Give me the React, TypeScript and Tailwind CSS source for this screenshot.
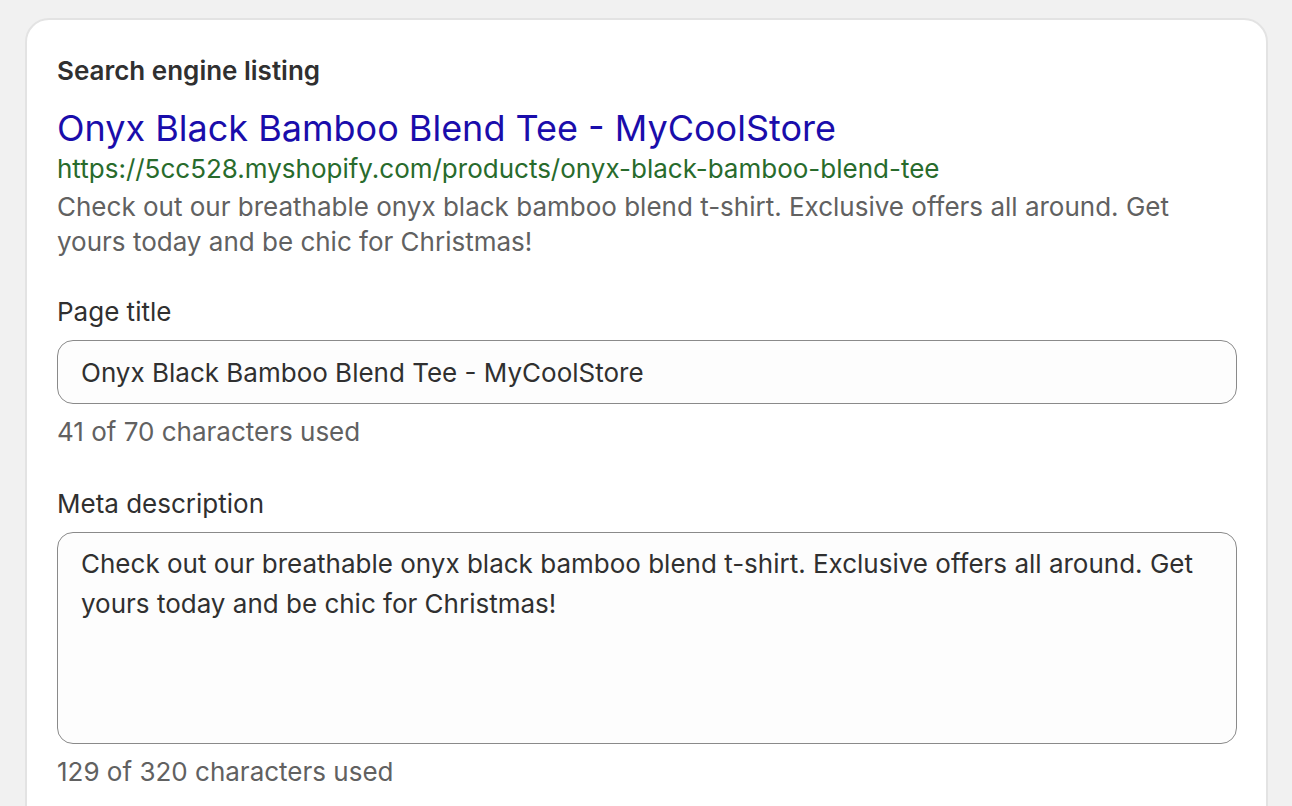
const font = { fontFamily: "Inter, 'Noto Sans', sans-serif" };

export default function App() {
  return (
    <div className="min-h-screen bg-[#f1f1f1] pl-[25px] pr-[24px] pt-[18px]" style={font}>
      <div className="rounded-[24px] border-2 border-[#e3e3e3] bg-white pl-[30px] pr-[29px] pt-[31px] pb-10">
        <h2 className="text-[26px] font-semibold leading-[40px] text-[#303030]">Search engine listing</h2>

        {/* preview */}
        <div className="mt-[15px]">
          <div className="text-[36px] leading-[44px] text-[#1a0dab]">Onyx Black Bamboo Blend Tee - MyCoolStore</div>
          <div className="text-[26px] leading-[38px] text-[#286b2c]">
            https://5cc528.myshopify.com/products/onyx-black-bamboo-blend-tee
          </div>
          <p className="mt-[1px] text-[26px] leading-[35px] text-[#616161]">
            Check out our breathable onyx black bamboo blend t-shirt. Exclusive offers all around. Get yours today and be chic for Christmas!
          </p>
        </div>

        <div className="mt-[33px]">
          <label className="block text-[26px] leading-[40px] text-[#303030]">Page title</label>
          <div className="mt-[8px] flex h-[64px] items-center rounded-[16px] border border-[#8a8a8a] bg-[#fdfdfd] px-[23px] text-[26px] text-[#303030]">
            Onyx Black Bamboo Blend Tee - MyCoolStore
          </div>
          <div className="mt-[8px] text-[26px] leading-[40px] text-[#616161]">41 of 70 characters used</div>
        </div>

        <div className="mt-[32px]">
          <label className="block text-[26px] leading-[40px] text-[#303030]">Meta description</label>
          <div className="mt-[8px] h-[212px] rounded-[16px] border border-[#8a8a8a] bg-[#fdfdfd] px-[23px] py-[11px] text-[26px] leading-[40px] text-[#303030]">
            Check out our breathable onyx black bamboo blend t-shirt. Exclusive offers all around. Get yours today and be chic for Christmas!
          </div>
          <div className="mt-[8px] text-[26px] leading-[40px] text-[#616161]">129 of 320 characters used</div>
        </div>
      </div>
    </div>
  );
}
